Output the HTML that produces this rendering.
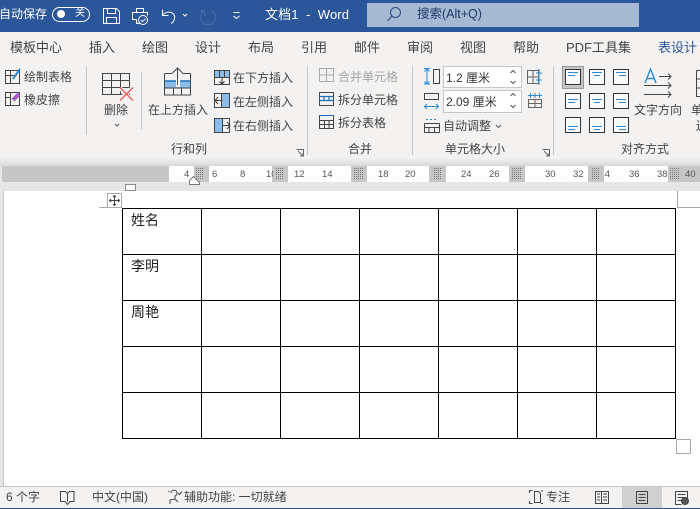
<!DOCTYPE html>
<html lang="zh"><head><meta charset="utf-8"><style>
*{box-sizing:border-box}
html,body{margin:0;padding:0;width:700px;height:509px;overflow:hidden;background:#fff}
body{position:relative;font-family:"Liberation Sans","Noto Sans CJK SC",sans-serif;font-size:12px;color:#444}
.a{position:absolute}
.t{position:absolute;white-space:nowrap;line-height:16px}
.tab{position:absolute;top:39px;font-size:13px;line-height:18px;color:#444;white-space:nowrap}
.w{color:#fff}
.r{position:absolute;top:167px;height:16px;font-size:9.500px;line-height:16px;color:#555}
svg{position:absolute;left:0;top:0;overflow:visible}
</style></head><body>
<div class="a" style="left:0;top:0;width:700px;height:32px;background:#2b579a"></div>
<div class="a" style="left:367px;top:3px;width:272px;height:24px;background:#a5b9d3"></div>
<div class="a" style="left:0;top:32px;width:700px;height:128px;background:#f3f2f1"></div>
<div class="a" style="left:0;top:158px;width:700px;height:8px;background:linear-gradient(#f3f2f1,#d8d8d8)"></div>
<div class="a" style="left:0;top:166px;width:700px;height:25px;background:#e6e6e6"></div>
<div class="a" style="left:2px;top:166px;width:698px;height:16px;background:#c6c6c6"></div>
<div class="a" style="left:169px;top:166px;width:25px;height:16px;background:#fff"></div>
<div class="a" style="left:209px;top:166px;width:63px;height:16px;background:#fff"></div>
<div class="a" style="left:288px;top:166px;width:63px;height:16px;background:#fff"></div>
<div class="a" style="left:367px;top:166px;width:62px;height:16px;background:#fff"></div>
<div class="a" style="left:446px;top:166px;width:63px;height:16px;background:#fff"></div>
<div class="a" style="left:525px;top:166px;width:63px;height:16px;background:#fff"></div>
<div class="a" style="left:604px;top:166px;width:64px;height:16px;background:#fff"></div>
<div class="a" style="left:0;top:191px;width:4px;height:296px;background:#e6e6e6;border-right:1px solid #c6c6c6"></div>

<div class="t w" style="left:-1px;top:6px;font-size:12px">自动保存</div>
<div class="a" style="left:52px;top:7px;width:38px;height:15px;border:1px solid #fff;border-radius:8px"></div>
<div class="a" style="left:57px;top:10px;width:8px;height:8px;background:#fff;border-radius:50%"></div>
<div class="t w" style="left:75px;top:6px;font-size:10px">关</div>
<svg width="700" height="32" fill="none" stroke="#fff" stroke-width="1">
<path d="M103.500 8.500h13l3 3v12h-16zM107.500 8.500v5h8v-5M106.500 23.500v-6h10v6"/>
<path d="M136.500 12.500v-4h7v4M132.500 12.500h15v3M132.500 12.500v7h4M136.500 19.500v4h4"/>
<circle cx="143" cy="20" r="4.500"/><path d="M140.800 20l1.700 1.700 3-3"/>
<path d="M162.500 9.500v6h6M163 15c2-3 7-4 10-1.500 3 3 1.500 8-2 10"/>
<path d="M183 14l2 2 2-2"/>
<path stroke="#4a6ea6" d="M204.500 10.500a7.500 7.500 0 1 0 7 0M204.500 10.500v5M204.500 10.500h-4"/>
<path d="M233.500 12.500h6M233.500 16l3 2.500 3-2.500"/>
<circle cx="395.500" cy="12.500" r="5" stroke="#2b4a7a"/><path stroke="#2b4a7a" d="M392 16l-4.500 5"/>
</svg>
<div class="t w" style="left:265px;top:7px;font-size:13px;letter-spacing:.1px">文档1&nbsp; -&nbsp; Word</div>
<div class="t" style="left:417px;top:6px;color:#1f3a66;font-size:12.500px">搜索(Alt+Q)</div>

<div class="tab" style="left:10px">模板中心</div>
<div class="tab" style="left:89px">插入</div>
<div class="tab" style="left:142px">绘图</div>
<div class="tab" style="left:195px">设计</div>
<div class="tab" style="left:248px">布局</div>
<div class="tab" style="left:301px">引用</div>
<div class="tab" style="left:354px">邮件</div>
<div class="tab" style="left:407px">审阅</div>
<div class="tab" style="left:460px">视图</div>
<div class="tab" style="left:513px">帮助</div>
<div class="tab" style="left:566px">PDF工具集</div>
<div class="tab" style="left:658px;color:#2b579a">表设计</div>

<svg width="700" height="509" fill="none" stroke="#444" stroke-width="1">
<g stroke="#c6c6c6"><path d="M86.500 66v69M141.500 72v57M307.500 66v89M412.500 66v89M553.500 66v89"/></g>
<!-- draw table -->
<path d="M5.500 70.500h14v13h-14zM5.500 75.500h10M10.500 70.500v13"/><path stroke="#2b8ad0" stroke-width="2" d="M13 79l7-10"/>
<path d="M5.500 92.500h14v13h-14zM5.500 97.500h5M10.500 92.500v13"/><path stroke="#a05cc0" stroke-width="4" d="M13 100l6-6"/>
<!-- delete -->
<path d="M102.500 73.500h27v21h-27zM102.500 80.500h27M102.500 87.500h27M111.500 73.500v21M120.500 73.500v21"/>
<path stroke="#f3f2f1" stroke-width="4" d="M120 88l12 12M132 88l-12 12"/>
<path stroke="#e8534e" stroke-width="1.300" d="M120 87.500l13 13M133 87.500l-13 13"/>
<path stroke="#555" d="M115 124l2 2 2-2"/>
<!-- insert above -->
<rect x="165" y="81" width="25" height="7" fill="#8bbdea" stroke="none"/>
<path d="M164.500 73.500v21.500h26v-21.500M164.500 73.500h8M182.500 73.500h8M173.500 88v7M181.500 88v7"/>
<path stroke="#1e6fb8" d="M164.500 81h26" stroke-width="1.500"/><path d="M164.500 88h26"/>
<path fill="#fff" stroke="none" d="M176 78h4v9h-4z"/>
<path d="M177.500 85v-17M172.500 73l5-5 5 5"/>
<!-- below -->
<rect x="215" y="71" width="14" height="6" fill="#8bbdea" stroke="none"/>
<path d="M214.500 70.500h15v14h-15zM214.500 77.500h15M219.500 70.500v7M224.500 70.500v7"/><path stroke="#333" d="M222 77v7M219.500 81.500l2.500 2.500 2.500-2.500"/>
<!-- left -->
<rect x="222" y="94" width="7" height="13" fill="#8bbdea" stroke="none"/>
<path d="M214.500 93.500h15v14h-15zM221.500 93.500v14"/><path d="M214.500 100.500h8M218 97l-3 3.500 3 3.500"/>
<!-- right -->
<rect x="215" y="119" width="7" height="13" fill="#8bbdea" stroke="none"/>
<path d="M214.500 118.500h15v14h-15zM222.500 118.500v14"/><path d="M222 125.500h8M227 122l3 3.500-3 3.500"/>
<!-- merge -->
<path stroke="#aaa" d="M319.500 68.500h14v13h-14zM319.500 75h14M326.500 68.500v13"/>
<path d="M319.500 92.500h14v13h-14z"/><path stroke="#1e6fb8" d="M319.500 96.500h14M319.500 100.500h14M324 96.500v4M329 96.500v4" stroke-width="1.200"/>
<path d="M319.500 115.500h14v13h-14zM319.500 120.500h14M319.500 124.500h14M324.500 120.500v8M329 120.500v8"/><path stroke="#1e6fb8" d="M319.500 115.500h14"/>
<!-- size -->
<path d="M433.500 69.500h6v14h-6z"/>
<path stroke="#2b8ad0" d="M424 68.500h6M424 84h6M427 69v15M424.500 71.500l2.500-2.500 2.500 2.500M424.500 81.500l2.500 2.500 2.500-2.500"/>
<path d="M424.500 93.500h14v6h-14z"/>
<path stroke="#2b8ad0" d="M424 106.500h15M427 104l-2.500 2.500 2.500 2.500M436 104l2.500 2.500-2.500 2.500"/>
<rect x="443.500" y="66.500" width="78" height="21" fill="#fff" stroke="#c6c6c6"/>
<rect x="443.500" y="90.500" width="78" height="22" fill="#fff" stroke="#c6c6c6"/>
<path stroke="#555" d="M510.500 73l2.500-2.500 2.500 2.500M510.500 81l2.500 2.500 2.500-2.500M510.500 96l2.500-2.500 2.500 2.500M510.500 105l2.500 2.500 2.500-2.500"/>
<path d="M527.500 70.500h11v13h-11zM533 70.500v13M527.500 77h11" stroke="#666"/><path stroke="#2b8ad0" d="M539 69v16M536 73h6M536 80h6"/>
<path d="M528.500 99.500h13v8h-13zM528.500 103.500h13M535 99.500v8" stroke="#666"/><path stroke="#2b8ad0" d="M528 95.500h14M530.500 93v5M535 93v5M539.500 93v5"/>
<!-- autofit -->
<path d="M424.500 132.500v-9M439.500 132.500v-9M424.500 123.500h15M424.500 127.500h15M424.500 132.500h15M429 127.500v5M434.500 127.500v5"/>
<path stroke="#2b8ad0" stroke-dasharray="2 2" d="M426 119.500h12"/>
<path stroke="#555" d="M496 125l2.500 2.500 2.500-2.500"/>
<!-- align -->
<rect x="562.500" y="66.500" width="21" height="22" fill="#c6c6c6" stroke="#999"/>
<g fill="#fafafa" stroke="#333">
<rect x="565.500" y="69.500" width="15" height="15"/><rect x="589.500" y="69.500" width="15" height="15"/><rect x="613.500" y="69.500" width="15" height="15"/>
<rect x="565.500" y="93.500" width="15" height="15"/><rect x="589.500" y="93.500" width="15" height="15"/><rect x="613.500" y="93.500" width="15" height="15"/>
<rect x="565.500" y="117.500" width="15" height="15"/><rect x="589.500" y="117.500" width="15" height="15"/><rect x="613.500" y="117.500" width="15" height="15"/>
</g>
<g stroke="#2b8ad0">
<path d="M568 72.500h10M568 75.500h7M592 72.500h10M594 75.500h6M616 72.500h10M619 75.500h7"/>
<path d="M568 99.500h10M568 102.500h7M592 99.500h10M594 102.500h6M616 99.500h10M619 102.500h7"/>
<path d="M568 126.500h10M568 129.500h7M592 126.500h10M594 129.500h6M616 126.500h10M619 129.500h7"/>
</g>
<path stroke="#2b8ad0" stroke-width="1.400" d="M645 83l5.500-14 5.500 14M647 78.500h7"/>
<path stroke-width="1" d="M659 76.500h12M668 73.500l3 3-3 3M644 85.500h27M668 82.500l3 3-3 3M644 94.500h27M668 91.500l3 3-3 3"/>
<path d="M696.500 70.500v26h4M696.500 70.500h4M696.500 79h4M696.500 88h4"/>
<!-- dialog launchers -->
<path stroke="#666" d="M296.500 149.500h7v7M298 151l5 5M300 156h3v-3"/>
<path stroke="#666" d="M542.500 149.500h7v7M544 151l5 5M546 156h3v-3"/>
</svg>

<div class="t" style="left:24px;top:69px;font-size:12px">绘制表格</div>
<div class="t" style="left:24px;top:92px;font-size:12px">橡皮擦</div>
<div class="t" style="left:104px;top:102px">删除</div>
<div class="t" style="left:148px;top:102px">在上方插入</div>
<div class="t" style="left:233px;top:70px">在下方插入</div>
<div class="t" style="left:233px;top:94px">在左侧插入</div>
<div class="t" style="left:233px;top:118px">在右侧插入</div>
<div class="t" style="left:171px;top:141px">行和列</div>
<div class="t" style="left:338px;top:69px;color:#a6a6a6">合并单元格</div>
<div class="t" style="left:338px;top:92px">拆分单元格</div>
<div class="t" style="left:338px;top:115px">拆分表格</div>
<div class="t" style="left:348px;top:141px">合并</div>
<div class="t" style="left:446px;top:70px;color:#333">1.2 厘米</div>
<div class="t" style="left:446px;top:94px;color:#333">2.09 厘米</div>
<div class="t" style="left:443px;top:118px">自动调整</div>
<div class="t" style="left:445px;top:141px">单元格大小</div>
<div class="t" style="left:634px;top:102px">文字方向</div>
<div class="t" style="left:691px;top:102px">单元格</div>
<div class="t" style="left:696px;top:118px">边距</div>
<div class="t" style="left:621px;top:141px">对齐方式</div>

<div class="r" style="left:184px">4</div><div class="r" style="left:212px">6</div><div class="r" style="left:240px">8</div><div class="r" style="left:266px;width:7px;overflow:hidden">10</div>
<div class="r" style="left:294px">12</div><div class="r" style="left:322px">14</div><div class="r" style="left:378px">18</div><div class="r" style="left:405px">20</div>
<div class="r" style="left:461px">24</div><div class="r" style="left:489px">26</div><div class="r" style="left:545px">30</div><div class="r" style="left:573px">32</div>
<div class="r" style="left:629px">36</div><div class="r" style="left:657px">38</div><div class="r" style="left:685px">40</div><div class="r" style="left:604px;width:6px;overflow:hidden;direction:rtl">34</div>

<svg width="700" height="509" fill="none" stroke="#555">
<defs><pattern id="p" width="2" height="2" patternUnits="userSpaceOnUse"><rect width="1" height="1" fill="#777" stroke="none"/></pattern></defs>
<g stroke="none">
<rect x="194" y="166" width="13" height="16" fill="#c6c6c6"/><rect x="273" y="166" width="14" height="16" fill="#c6c6c6"/><rect x="352" y="166" width="14" height="16" fill="#c6c6c6"/><rect x="431" y="166" width="14" height="16" fill="#c6c6c6"/><rect x="510" y="166" width="14" height="16" fill="#c6c6c6"/><rect x="589" y="166" width="14" height="16" fill="#c6c6c6"/><rect x="668" y="166" width="14" height="16" fill="#c6c6c6"/>
<rect x="195" y="168" width="9" height="11" fill="url(#p)"/><rect x="275" y="168" width="9" height="11" fill="url(#p)"/><rect x="354" y="168" width="9" height="11" fill="url(#p)"/><rect x="433" y="168" width="9" height="11" fill="url(#p)"/><rect x="512" y="168" width="9" height="11" fill="url(#p)"/><rect x="591" y="168" width="9" height="11" fill="url(#p)"/><rect x="670" y="168" width="9" height="11" fill="url(#p)"/>
</g>
<path fill="#fff" stroke="#777" d="M189.500 184.500v-4l4-4 6 6v2z"/>
<rect x="125.500" y="184.500" width="10" height="6" fill="#fff" stroke="#888"/>
<rect x="107.500" y="193.500" width="14" height="14" fill="#fff" stroke="#aaa"/>
<path stroke="#444" d="M114.500 195.500v10M109.500 200.500h10M113 197l1.500-1.500 1.500 1.500M113 204l1.500 1.500 1.500-1.500M111 199l-1.500 1.500 1.500 1.500M118 199l1.500 1.500-1.500 1.500"/>
<path stroke="#aaa" d="M99 207.500h23M677.500 191v16.500H700"/>
<path stroke="#000" d="M122.500 208.500h553M122.500 254.500h553M122.500 300.500h553M122.500 346.500h553M122.500 392.500h553M122.500 438.500h553M122.500 208v231M201.500 208v231M280.500 208v231M359.500 208v231M438.500 208v231M517.500 208v231M596.500 208v231M675.500 208v231"/>
<rect x="676.500" y="439.500" width="14" height="14" fill="#fff" stroke="#aaa"/>
</svg>
<div class="t" style="left:131px;top:212px;font-size:14px;color:#222">姓名</div>
<div class="t" style="left:131px;top:258px;font-size:14px;color:#222">李明</div>
<div class="t" style="left:131px;top:304px;font-size:14px;color:#222">周艳</div>

<div class="a" style="left:0;top:486px;width:700px;height:22px;background:#f3f2f1;border-top:1px solid #c6c6c6"></div>
<div class="a" style="left:0;top:508px;width:700px;height:1px;background:#2b579a"></div>
<div class="a" style="left:622px;top:487px;width:40px;height:21px;background:#d0d0d0"></div>
<div class="t" style="left:6px;top:489px">6 个字</div>
<div class="t" style="left:92px;top:489px">中文(中国)</div>
<div class="t" style="left:184px;top:489px">辅助功能: 一切就绪</div>
<div class="t" style="left:546px;top:489px">专注</div>
<svg width="700" height="509" fill="none" stroke="#444">
<path d="M60.500 491.500h5l2 2 2-2h4.500v10h-4l-2.500 3-2.500-3h-4.500zM67.500 493.500v8"/>
<path d="M171 493a3 3 0 1 1 4 3v3l3 3M175 499l-5 1v4M168.500 491l1 1M178 493l1.500 1.500 2.500-3"/>
<path d="M529.500 493v-2.500h3M529.500 501v2.500h3M543 491h-2M543 503.500h-2M534.500 491.500h4l2 2v9h-6z"/>
<path d="M595.500 491.500h6v12h-6zM601.500 491.500h7v12h-7zM597 494h3M597 497h3M597 500h3M603 494h4M603 497h4M603 500h4"/>
<path d="M636.500 491.500h11v12h-11zM638.500 494.500h7M638.500 497.500h7M638.500 500.500h7"/>
<path d="M675.500 491.500h12v8M675.500 491.500v13h6M677.500 494.500h8M677.500 497.500h8M677.500 500.500h4"/>
<circle cx="685" cy="501" r="3.500" fill="#555"/>
</svg>
</body></html>
